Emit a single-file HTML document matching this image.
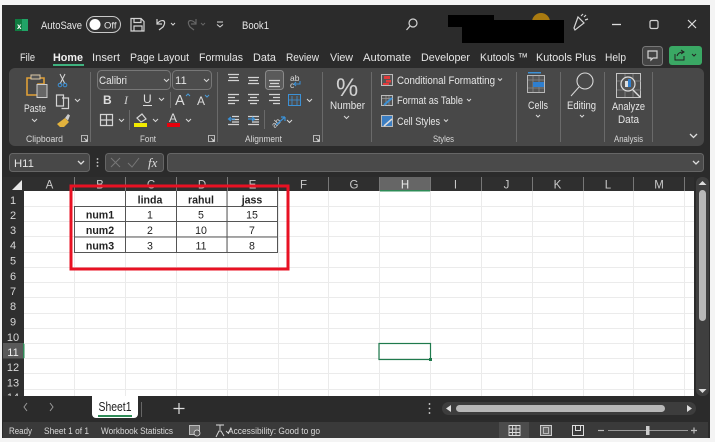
<!DOCTYPE html>
<html><head><meta charset="utf-8"><style>
html,body{margin:0;padding:0;width:715px;height:442px;overflow:hidden;background:#f4f4f4}
svg{display:block}
text{font-family:"Liberation Sans",sans-serif;fill:#e6e6e6;font-size:11.3px}
.s{font-size:9.6px;fill:#d8d8d8}
.h{font-size:11.5px;fill:#c8c8c8;text-anchor:middle}
.r{font-size:11px;fill:#d8d8d8;text-anchor:middle}
.c{font-size:10.6px;fill:#222;text-anchor:middle}
.b{font-weight:bold}
.i{fill:none;stroke:#d4d4d4;stroke-width:1.2}
.a{fill:none;stroke:#d6d6d6;stroke-width:1.1}
.v{fill:none;stroke:#d8d8d8;stroke-width:1}
.sep{stroke:#6a6a6a;stroke-width:1}
.g{stroke:#ebebeb;stroke-width:1}
</style></head><body>
<svg width="715" height="442" viewBox="0 0 715 442" xmlns="http://www.w3.org/2000/svg">
<rect x="2" y="5" width="708" height="433" fill="#2b2b2b"/>
<!-- title bar -->
<rect x="15" y="19" width="13" height="12" fill="#107c41"/>
<rect x="22" y="19" width="6" height="12" fill="#21a366"/>
<text x="17" y="29" style="font-size:8px;font-weight:bold;fill:#fff">x</text>
<text x="41" y="29" textLength="41" lengthAdjust="spacingAndGlyphs">AutoSave</text>
<rect x="86.500" y="16.500" width="34" height="16" rx="8" fill="#333" stroke="#c8c8c8"/>
<circle cx="95" cy="24.500" r="5.500" fill="#fff"/>
<text x="104" y="28.500" style="font-size:9.500px">Off</text>
<path class="i" d="M131 18.500h10l3 3v9.500h-13zM134 18.500v4h7v-4M134 31v-5h8v5"/>
<path class="i" d="M157 19v5h5M157 24c3-5 11-5 6 3l-4 3"/>
<path class="v" d="M171 23l2 2 2-2"/>
<path d="M196 19v5h-5M196 24c-3-5-11-5-6 3l4 3" fill="none" stroke="#666" stroke-width="1.200"/>
<path d="M201 23l2 2 2-2" fill="none" stroke="#666"/>
<path class="v" d="M217 22h6M217 24.500l3 2.500 3-2.500"/>
<text x="242" y="29" textLength="27" lengthAdjust="spacingAndGlyphs">Book1</text>
<circle cx="413" cy="23" r="4" class="i"/><path class="i" d="M410 26l-3.500 4"/>
<path d="M532 22a9 9 0 0 1 18 0z" fill="#a97a10"/>
<rect x="448" y="15" width="46" height="12" fill="#000"/>
<rect x="462" y="20" width="102" height="23" fill="#000"/>
<path class="i" d="M574 28l4-11 6 6-9 7zM581 16l2-2M585 20l3-1M584 17l2-2"/>
<path d="M612 24.500h9" stroke="#ddd" stroke-width="1.300"/>
<rect x="650" y="20.500" width="8" height="8" rx="1.500" class="i"/>
<path d="M688 20l8 8M696 20l-8 8" stroke="#ddd" stroke-width="1.200"/>
<!-- tabs -->
<text x="20" y="61" textLength="15" lengthAdjust="spacingAndGlyphs">File</text>
<text x="53" y="61" textLength="30" lengthAdjust="spacingAndGlyphs" style="font-weight:bold;fill:#f2f2f2">Home</text>
<rect x="53" y="64" width="31" height="2" fill="#3fb27f"/>
<text x="92" y="61" textLength="28" lengthAdjust="spacingAndGlyphs">Insert</text>
<text x="130" y="61" textLength="59" lengthAdjust="spacingAndGlyphs">Page Layout</text>
<text x="199" y="61" textLength="44" lengthAdjust="spacingAndGlyphs">Formulas</text>
<text x="253" y="61" textLength="23" lengthAdjust="spacingAndGlyphs">Data</text>
<text x="286" y="61" textLength="33" lengthAdjust="spacingAndGlyphs">Review</text>
<text x="330" y="61" textLength="23" lengthAdjust="spacingAndGlyphs">View</text>
<text x="363" y="61" textLength="48" lengthAdjust="spacingAndGlyphs">Automate</text>
<text x="421" y="61" textLength="49" lengthAdjust="spacingAndGlyphs">Developer</text>
<text x="480" y="61" textLength="48" lengthAdjust="spacingAndGlyphs">Kutools ™</text>
<text x="536" y="61" textLength="60" lengthAdjust="spacingAndGlyphs">Kutools Plus</text>
<text x="605" y="61" textLength="21" lengthAdjust="spacingAndGlyphs">Help</text>
<rect x="642.500" y="46.500" width="20" height="19" rx="3" fill="#444" stroke="#777"/>
<path class="i" d="M648 51h9v7h-4l-2 2v-2h-3z"/>
<rect x="669" y="46" width="33" height="19" rx="3" fill="#3aa864"/>
<path d="M675 54v6h9v-4M677 56c1-3 3-4 6-4M681 50l3 2-3 2" fill="none" stroke="#222" stroke-width="1"/>
<path d="M692 54l2 2 2-2" fill="none" stroke="#222"/>
<!-- ribbon -->
<rect x="9" y="68" width="695" height="78" rx="6" fill="#484848"/>
<g class="sep"><line x1="90.500" y1="72" x2="90.500" y2="142"/><line x1="217.500" y1="72" x2="217.500" y2="142"/><line x1="322.500" y1="72" x2="322.500" y2="142"/><line x1="371.500" y1="72" x2="371.500" y2="142"/><line x1="516.500" y1="72" x2="516.500" y2="142"/><line x1="560.500" y1="72" x2="560.500" y2="142"/><line x1="604.500" y1="72" x2="604.500" y2="142"/><line x1="652.500" y1="72" x2="652.500" y2="142"/></g>
<!-- clipboard -->
<path d="M27 78h17v6h-6v11h-11z" fill="none" stroke="#dfa038" stroke-width="1.600"/>
<rect x="31" y="75" width="9" height="4" fill="#555" stroke="#dcc9a8"/>
<rect x="37" y="84.500" width="10" height="13" fill="#666" stroke="#ccc"/>
<text x="24" y="112" textLength="22" lengthAdjust="spacingAndGlyphs">Paste</text>
<path class="v" d="M32 119l2.500 2.500 2.500-2.500"/>
<path d="M60 74l5 10M65 74l-5 10" stroke="#d8d8d8" fill="none"/><circle cx="60" cy="85" r="1.800" fill="none" stroke="#3c91d6"/><circle cx="65" cy="85" r="1.800" fill="none" stroke="#3c91d6"/>
<path class="i" d="M56.500 95h7v11h-7zM62 98h6.500v10.500h-7"/>
<path class="v" d="M75 99l2.500 2.500 2.500-2.500"/>
<path d="M57 124l8-6 4 4-5 5-4 0z" fill="#e3b33d"/><path d="M65 118l3-4 2 1.500-2 5" fill="#ccc"/>
<text x="26" y="142" class="s" textLength="37" lengthAdjust="spacingAndGlyphs">Clipboard</text>
<path class="a" d="M81.500 135.500h6v6h-6zM84 138l3 3M87 139v2h-2" style="stroke-width:.8"/>
<!-- font -->
<rect x="97.500" y="70.500" width="73" height="19" rx="4" fill="#4c4c4c" stroke="#777"/>
<text x="99" y="84" textLength="28" lengthAdjust="spacingAndGlyphs">Calibri</text>
<path class="v" d="M164 79l2.500 2.500 2.500-2.500"/>
<rect x="172.500" y="70.500" width="39" height="19" rx="4" fill="#4c4c4c" stroke="#777"/>
<text x="175" y="84">11</text>
<path class="v" d="M204 79l2.500 2.500 2.500-2.500"/>
<text x="103" y="104" style="font-size:12px;font-weight:bold;fill:#ddd">B</text>
<text x="124" y="104" style="font-size:12px;font-style:italic;font-family:'Liberation Serif',serif;fill:#ccc">I</text>
<text x="143" y="103" style="font-size:12px;fill:#ddd">U</text><path d="M143 105.500h9" stroke="#ddd"/>
<path class="v" d="M159 98l2.500 2.500 2.500-2.500"/>
<line x1="170.500" y1="92" x2="170.500" y2="108" class="sep"/>
<text x="175" y="105" style="font-size:14.500px;fill:#ddd">A</text><path d="M186 96l2-2 2 2" fill="none" stroke="#4a9cd8"/>
<text x="197" y="105" style="font-size:12px;fill:#ddd">A</text><path d="M205 95l2 2 2-2" fill="none" stroke="#4a9cd8"/>
<path class="i" d="M100.500 114.500h12v11h-12zM106.500 114.500v11M100.500 120h12"/>
<path class="v" d="M119 119l2.500 2.500 2.500-2.500"/>
<line x1="129.500" y1="110" x2="129.500" y2="130" class="sep"/>
<path class="i" d="M137 118l5-4 4 5-5 3z"/>
<rect x="134" y="123" width="13" height="4" fill="#f2ea00"/>
<path class="v" d="M153 119l2.500 2.500 2.500-2.500"/>
<text x="169" y="122" style="font-size:12px;fill:#ddd">A</text>
<rect x="167" y="123" width="13" height="4" fill="#e8000b"/>
<path class="v" d="M186 119l2.500 2.500 2.500-2.500"/>
<text x="140" y="142" class="s" textLength="16" lengthAdjust="spacingAndGlyphs">Font</text>
<path class="a" d="M208.500 135.500h6v6h-6zM211 138l3 3M214 139v2h-2" style="stroke-width:.8"/>
<!-- alignment -->
<rect x="265.500" y="70.500" width="18" height="19" rx="3" fill="#5a5a5a" stroke="#8a8a8a"/>
<g class="i">
<path d="M228 74.500h11M229 77.500h9M228 80.500h11"/>
<path d="M248 77.500h11M249 80.500h9M248 83.500h11"/>
<path d="M269 80.500h11M270 83.500h9M269 86.500h11"/>
<path d="M228 94.500h11M228 97.500h7M228 100.500h11M228 103.500h7"/>
<path d="M248 94.500h11M250 97.500h7M248 100.500h11M250 103.500h7"/>
<path d="M269 94.500h11M273 97.500h7M269 100.500h11M273 103.500h7"/>
<path d="M232 116.500h7M232 119.500h7M228 124.500h11M232 122h7"/>
<path d="M248 116.500h11M252 119.500h7M252 122h7M248 124.500h11"/>
</g>
<path d="M235 119h-6M231 117l-2.500 2 2.500 2" fill="none" stroke="#3c91d6" stroke-width="1.200"/>
<path d="M248 119h6M252 117l2.500 2-2.500 2" fill="none" stroke="#3c91d6" stroke-width="1.200"/>
<text x="290" y="81" style="font-size:8.500px;fill:#ddd">ab</text><text x="290" y="88" style="font-size:8.500px;fill:#ddd">c</text>
<path d="M300 81v3h-6M296 82l-2 2 2 2" fill="none" stroke="#3c91d6"/>
<rect x="288.500" y="94.500" width="12" height="11" fill="#4c4c4c" stroke="#3c91d6"/>
<path d="M288 100h13M292 96v9M297 96v9" stroke="#3c91d6" fill="none" stroke-width=".8"/>
<path class="v" d="M307 99l2.500 2.500 2.500-2.500"/>
<line x1="264.500" y1="110" x2="264.500" y2="129" class="sep"/>
<text x="270" y="127" transform="rotate(-45 274 122)" style="font-size:8.500px;fill:#ddd">ab</text>
<path d="M276 125l9-8M285 117l-4 0M285 117v4" fill="none" stroke="#3c91d6" stroke-width="1.200"/>
<path class="v" d="M287 120l2.500 2.500 2.500-2.500"/>
<text x="245" y="142" class="s" textLength="37" lengthAdjust="spacingAndGlyphs">Alignment</text>
<path class="a" d="M313.500 135.500h6v6h-6zM316 138l3 3M319 139v2h-2" style="stroke-width:.8"/>
<!-- number -->
<text x="336" y="96" style="font-size:25px;fill:#d0d0d0">%</text>
<text x="330" y="109" textLength="35" lengthAdjust="spacingAndGlyphs">Number</text>
<path class="v" d="M344 116l2.500 2.500 2.500-2.500"/>
<!-- styles -->
<rect x="381.500" y="74.500" width="11" height="11" fill="#555" stroke="#bbb"/>
<rect x="384" y="76" width="6" height="3" fill="#e23b3b"/><rect x="386" y="80" width="5" height="2.500" fill="#e23b3b"/><rect x="383" y="83" width="6" height="2" fill="#e23b3b"/>
<text x="397" y="84" textLength="98" lengthAdjust="spacingAndGlyphs">Conditional Formatting</text>
<path class="v" d="M498 78.500l2 2 2-2"/>
<rect x="381.500" y="95.500" width="11" height="10" fill="#555" stroke="#bbb"/><path d="M382 98.500h10M386 96v9M389 96v9" stroke="#999" stroke-width=".7"/><path d="M384 105l8-7" stroke="#3c91d6" stroke-width="2"/>
<text x="397" y="104" textLength="66" lengthAdjust="spacingAndGlyphs">Format as Table</text>
<path class="v" d="M467 99l2 2 2-2"/>
<rect x="381.500" y="115.500" width="11" height="11" fill="#3c7ec2" stroke="#bbb"/><path d="M384 126l8-7" stroke="#ddd" stroke-width="1.500"/>
<text x="397" y="125" textLength="43" lengthAdjust="spacingAndGlyphs">Cell Styles</text>
<path class="v" d="M444 119.500l2 2 2-2"/>
<text x="433" y="142" class="s" textLength="21" lengthAdjust="spacingAndGlyphs">Styles</text>
<!-- cells -->
<rect x="528" y="72" width="13" height="1.500" fill="#3c91d6"/>
<rect x="527.500" y="75.500" width="17" height="17" fill="#555" stroke="#b8b8b8"/>
<path d="M528 80h16M528 88h16M533 76v16M539 76v16" stroke="#888" stroke-width=".8"/>
<rect x="533" y="82" width="11" height="5" fill="#2f7fd0"/>
<text x="528" y="109" textLength="20" lengthAdjust="spacingAndGlyphs">Cells</text>
<path class="v" d="M536 115l2 2 2-2"/>
<!-- editing -->
<circle cx="585" cy="81" r="8" fill="none" stroke="#d8d8d8" stroke-width="1.100"/><path d="M579 87l-8 9" stroke="#d8d8d8" fill="none"/>
<text x="567" y="109" textLength="29" lengthAdjust="spacingAndGlyphs">Editing</text>
<path class="v" d="M580 115l2 2 2-2"/>
<!-- analyze -->
<rect x="616.500" y="73.500" width="24" height="24" fill="#4d4d4d" stroke="#c4c4c4"/>
<path d="M617 81h24M617 90h24M625 74v23M633 74v23" stroke="#888" stroke-width=".8"/>
<circle cx="628" cy="84" r="7" fill="#555" stroke="#ddd" stroke-width="1.200"/>
<rect x="625" y="81" width="3" height="6" fill="#ddd"/><rect x="628" y="79" width="3" height="8" fill="#2f7fd0"/>
<path d="M633 90l7 7" stroke="#ddd" stroke-width="1.400"/>
<text x="612" y="110" textLength="33" lengthAdjust="spacingAndGlyphs">Analyze</text>
<text x="618" y="123" textLength="21" lengthAdjust="spacingAndGlyphs">Data</text>
<text x="614" y="142" class="s" textLength="29" lengthAdjust="spacingAndGlyphs">Analysis</text>
<path d="M690 134l3.500 3.500 3.500-3.500" fill="none" stroke="#ddd" stroke-width="1.300"/>
<!-- formula bar -->
<rect x="9.500" y="153.500" width="80" height="18" rx="3" fill="#484848" stroke="#666"/>
<text x="14" y="167">H11</text>
<path d="M78 161l3 3 3-3" fill="none" stroke="#ddd" stroke-width="1.300"/>
<circle cx="97.500" cy="159" r=".9" fill="#ccc"/><circle cx="97.500" cy="162.500" r=".9" fill="#ccc"/><circle cx="97.500" cy="166" r=".9" fill="#ccc"/>
<rect x="105.500" y="153.500" width="58" height="18" rx="3" fill="#484848" stroke="#666"/>
<path d="M111 158l9 9M120 158l-9 9M128 163l4 4 7-9" fill="none" stroke="#777"/>
<text x="148" y="167" style="font-size:13px;font-style:italic;font-family:'Liberation Serif',serif;fill:#ddd">fx</text>
<rect x="167.500" y="153.500" width="536" height="18" rx="3" fill="#4a4a4a" stroke="#666"/>
<path d="M693 161l3 3 3-3" fill="none" stroke="#ddd" stroke-width="1.300"/>
<!-- sheet -->
<rect x="24" y="191" width="670" height="205" fill="#fff"/>
<rect x="3" y="177" width="691" height="14" fill="#2f2f2f"/>
<rect x="3" y="191" width="21" height="205" fill="#2f2f2f"/>
<path d="M12 190l10-10v10z" fill="#e8e8e8"/>
<rect x="379.500" y="177" width="51" height="14" fill="#666"/>
<rect x="379.500" y="190" width="51" height="1.500" fill="#2e8b57"/>
<rect x="3" y="343" width="21" height="15.500" fill="#5a5a5a"/>
<rect x="23" y="343" width="1.500" height="15.500" fill="#2e8b57"/>
<g class="g">
<path d="M24 206.500h670M24 221.500h670M24 236.500h670M24 252.500h670M24 267.500h670M24 282.500h670M24 297.500h670M24 313.500h670M24 328.500h670M24 343.500h670M24 358.500h670M24 373.500h670M24 389.500h670" fill="none"/>
<path d="M74.500 191v205M125.500 191v205M176.500 191v205M227.500 191v205M278.500 191v205M328.500 191v205M379.500 191v205M430.500 191v205M481.500 191v205M532.500 191v205M583.500 191v205M633.500 191v205M684.500 191v205" fill="none"/>
</g>
<g class="sep" style="stroke:#777"><path d="M74.500 177v14M125.500 177v14M176.500 177v14M227.500 177v14M278.500 177v14M328.500 177v14M379.500 177v14M430.500 177v14M481.500 177v14M532.500 177v14M583.500 177v14M633.500 177v14M684.500 177v14" fill="none"/></g>
<g>
<text x="49.500" y="188.500" class="h">A</text><text x="100" y="188.500" class="h">B</text><text x="151" y="188.500" class="h">C</text><text x="202" y="188.500" class="h">D</text><text x="252.500" y="188.500" class="h">E</text><text x="303.500" y="188.500" class="h">F</text><text x="354" y="188.500" class="h">G</text><text x="405" y="188.500" class="h" style="fill:#e8e8e8">H</text><text x="455.500" y="188.500" class="h">I</text><text x="506.500" y="188.500" class="h">J</text><text x="557.500" y="188.500" class="h">K</text><text x="608" y="188.500" class="h">L</text><text x="659" y="188.500" class="h">M</text>
</g>
<g>
<text x="13" y="204" class="r">1</text><text x="13" y="219" class="r">2</text><text x="13" y="234" class="r">3</text><text x="13" y="249" class="r">4</text><text x="13" y="264.500" class="r">5</text><text x="13" y="280" class="r">6</text><text x="13" y="295" class="r">7</text><text x="13" y="310" class="r">8</text><text x="13" y="325.500" class="r">9</text><text x="13" y="341" class="r">10</text><text x="13" y="356" class="r" style="fill:#eee">11</text><text x="13" y="371" class="r">12</text><text x="13" y="386.500" class="r">13</text><text x="13" y="401" class="r">14</text>
</g>
<!-- data table -->
<path d="M125.500 191.500v15M74.500 206.500h203M74.500 221.500h203M74.500 237h203M74.500 252.500h203M74.500 206v47M125.500 191v62M176.500 191v62M227 191v62M277.500 191v62" fill="none" stroke="#555" stroke-width="1"/>
<g>
<text x="150" y="203.500" class="c b">linda</text><text x="201" y="203.500" class="c b">rahul</text><text x="252" y="203.500" class="c b">jass</text>
<text x="100" y="218.500" class="c b">num1</text><text x="150" y="218.500" class="c">1</text><text x="201" y="218.500" class="c">5</text><text x="252" y="218.500" class="c">15</text>
<text x="100" y="234" class="c b">num2</text><text x="150" y="234" class="c">2</text><text x="201" y="234" class="c">10</text><text x="252" y="234" class="c">7</text>
<text x="100" y="249.500" class="c b">num3</text><text x="150" y="249.500" class="c">3</text><text x="201" y="249.500" class="c">11</text><text x="252" y="249.500" class="c">8</text>
</g>
<rect x="71" y="186" width="217" height="83" fill="none" stroke="#e81123" stroke-width="3"/>
<!-- selection -->
<rect x="379" y="343.500" width="51.500" height="16" fill="none" stroke="#1f7a4d" stroke-width="1.200"/>
<rect x="429" y="358" width="3" height="3" fill="#1f7a4d"/>
<!-- vertical scrollbar -->
<rect x="696" y="177" width="13" height="219" rx="6" fill="#3f3f3f"/>
<path d="M698.500 185l4-4 4 4z" fill="#ddd"/>
<rect x="699" y="190" width="7" height="131" rx="3.500" fill="#b8b8b8"/>
<path d="M698.500 389l4 4 4-4z" fill="#ddd"/>
<!-- sheet tabs -->
<rect x="3" y="396" width="705" height="25" fill="#2b2b2b"/>
<path d="M27 403l-3 4 3 4M50 403l3 4-3 4" fill="none" stroke="#999" stroke-width="1"/>
<path d="M92 396h46v18a4 4 0 0 1-4 4H96a4 4 0 0 1-4-4z" fill="#fff"/>
<text x="98.500" y="411" textLength="33" lengthAdjust="spacingAndGlyphs" style="font-size:12.500px;fill:#222">Sheet1</text>
<rect x="98" y="415" width="34" height="2" fill="#2e8b57"/>
<line x1="141.500" y1="402" x2="141.500" y2="417" stroke="#666"/>
<path d="M179 403v11M173.500 408.500h11" stroke="#ddd" stroke-width="1.200"/>
<circle cx="429.500" cy="404" r=".9" fill="#ddd"/><circle cx="429.500" cy="408.500" r=".9" fill="#ddd"/><circle cx="429.500" cy="413" r=".9" fill="#ddd"/>
<rect x="442" y="402" width="254" height="13" rx="6.500" fill="#3d3d3d"/>
<path d="M451 405l-5 3.500 5 3.500z" fill="#ddd"/>
<rect x="456" y="405" width="209" height="7" rx="3.500" fill="#b8b8b8"/>
<path d="M687 405l5 3.500-5 3.500z" fill="#ddd"/>
<!-- status bar -->
<rect x="3" y="422" width="705" height="16" fill="#3a3a3a"/>
<text x="9" y="434" class="s" textLength="23" lengthAdjust="spacingAndGlyphs">Ready</text>
<text x="44" y="434" class="s" textLength="45" lengthAdjust="spacingAndGlyphs">Sheet 1 of 1</text>
<text x="101" y="434" class="s" textLength="72" lengthAdjust="spacingAndGlyphs">Workbook Statistics</text>
<text x="228" y="434" class="s" textLength="92" lengthAdjust="spacingAndGlyphs">Accessibility: Good to go</text>
<rect x="189.500" y="425.500" width="10" height="9" fill="#777" stroke="#bbb"/><circle cx="197" cy="433" r="3" fill="#555" stroke="#ddd" stroke-width=".8"/>
<path d="M216 425h8M220 425v5M216 437l3-6h2l3 5M226 431l2 2 3-4" fill="none" stroke="#ddd" stroke-width=".9"/>
<rect x="499" y="422" width="30" height="16" fill="#4c4c4c"/>
<path d="M509 425.500h11v10h-11zM509 429h11M509 432.500h11M512.500 425v11M516 425v11" fill="none" stroke="#ddd" stroke-width=".9"/>
<rect x="540.500" y="425.500" width="11" height="10" fill="#666" stroke="#ccc"/><rect x="543.500" y="427.500" width="5" height="6" fill="none" stroke="#ccc" stroke-width=".8"/>
<path d="M572.500 425.500h11v10h-11zM575.500 425.500v5h5v-5" fill="none" stroke="#ddd"/>
<path d="M598 430.500h6" stroke="#bbb" stroke-width="1.200"/>
<path d="M608 430.500h80" stroke="#999" stroke-width="1"/>
<rect x="646" y="426" width="3.500" height="9" fill="#ccc"/>
<path d="M691 430.500h6M694 427.500v6" stroke="#bbb" stroke-width="1.200"/>
</svg>
</body></html>
